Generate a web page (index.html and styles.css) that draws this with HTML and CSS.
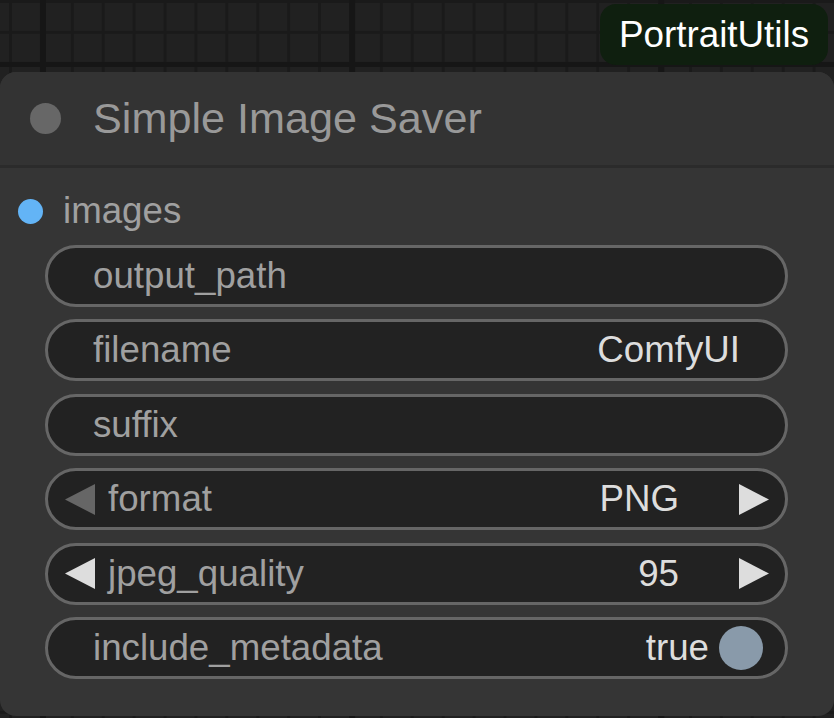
FILE: index.html
```html
<!DOCTYPE html>
<html>
<head>
<meta charset="utf-8">
<link rel="stylesheet" href="styles.css">
</head>
<body>
<div class="canvas">
  <div class="badge">PortraitUtils</div>
  <div class="node">
    <div class="node-title">
      <span class="title-dot"></span>
      <span class="title-text">Simple Image Saver</span>
    </div>
    <div class="node-body">
      <div class="input-row">
        <span class="slot-dot"></span>
        <span class="slot-label">images</span>
      </div>
      <div class="widgets">
        <div class="widget">
          <span class="w-label">output_path</span>
        </div>
        <div class="widget">
          <span class="w-label">filename</span>
          <span class="w-value">ComfyUI</span>
        </div>
        <div class="widget">
          <span class="w-label">suffix</span>
        </div>
        <div class="widget combo">
          <svg class="arrow dim" width="30" height="31" viewBox="0 0 30 31"><polygon points="30,0 30,31 0,15.5"/></svg>
          <span class="w-label">format</span>
          <span class="w-value">PNG</span>
          <svg class="arrow" width="30" height="31" viewBox="0 0 30 31"><polygon points="0,0 0,31 30,15.5"/></svg>
        </div>
        <div class="widget combo">
          <svg class="arrow" width="30" height="31" viewBox="0 0 30 31"><polygon points="30,0 30,31 0,15.5"/></svg>
          <span class="w-label">jpeg_quality</span>
          <span class="w-value">95</span>
          <svg class="arrow" width="30" height="31" viewBox="0 0 30 31"><polygon points="0,0 0,31 30,15.5"/></svg>
        </div>
        <div class="widget toggle">
          <span class="w-label">include_metadata</span>
          <span class="w-value">true</span>
          <span class="knob"></span>
        </div>
      </div>
    </div>
  </div>
</div>
</body>
</html>
```
FILE: styles.css
```css
* { box-sizing: border-box; }
html, body {
  margin: 0;
  padding: 0;
  width: 834px;
  height: 718px;
  overflow: hidden;
  font-family: "Liberation Sans", Arial, sans-serif;
}
.canvas {
  position: relative;
  width: 834px;
  height: 718px;
  background-color: #212121;
  background-image:
    linear-gradient(to right, #161616 6px, transparent 6px),
    linear-gradient(to bottom, #161616 5px, transparent 5px),
    linear-gradient(to right, #1a1a1a 3px, transparent 3px),
    linear-gradient(to bottom, #1a1a1a 3px, transparent 3px);
  background-size: 309.2px 100%, 100% 309.2px, 30.92px 100%, 100% 30.92px;
  background-position: 40px 0, 0 62px, 9px 0, 0 0;
}
.badge {
  position: absolute;
  left: 600px;
  top: 4px;
  width: 228px;
  height: 61px;
  border-radius: 16px;
  background: #0f1f0f;
  color: #ffffff;
  font-size: 36.8px;
  display: flex;
  align-items: center;
  justify-content: center;
}
.node {
  position: absolute;
  left: 0;
  top: 72px;
  width: 834px;
  height: 644px;
  border-radius: 16px;
  background: #353535;
  overflow: hidden;
}
.node-title {
  height: 96px;
  background: #333333;
  border-bottom: 3px solid #2b2b2b;
  display: flex;
  align-items: center;
  padding-left: 30px;
  gap: 32px;
}
.title-dot {
  width: 31px;
  height: 31px;
  border-radius: 50%;
  background: #676767;
  flex: none;
}
.title-text {
  font-size: 43.2px;
  color: #999999;
}
.node-body {
  padding-top: 23px;
}
.input-row {
  height: 40px;
  display: flex;
  align-items: center;
  padding-left: 18px;
  gap: 20px;
}
.slot-dot {
  width: 25px;
  height: 25px;
  border-radius: 50%;
  background: #63b4f6;
  flex: none;
}
.slot-label {
  font-size: 36.7px;
  color: #a0a0a0;
}
.widgets {
  margin-top: 14px;
  padding: 0 46px 0 45px;
  display: flex;
  flex-direction: column;
  gap: 12.4px;
}
.widget {
  height: 62px;
  border: 3px solid #666666;
  border-radius: 31px;
  background: #222222;
  display: flex;
  align-items: center;
  padding: 0 45px;
  font-size: 36.7px;
}
.w-label {
  flex: 1;
  color: #a0a0a0;
  white-space: nowrap;
}
.w-value {
  color: #dddddd;
  white-space: nowrap;
}
.combo {
  padding: 0 16px 0 17px;
}
.combo .w-label {
  margin-left: 13px;
}
.combo .w-value {
  margin-right: 60px;
}
.arrow {
  flex: none;
  fill: #dddddd;
}
.arrow.dim {
  fill: #666666;
}
.toggle {
  padding-right: 22px;
}
.toggle .w-value {
  margin-right: 10px;
}
.knob {
  width: 44px;
  height: 44px;
  border-radius: 50%;
  background: #899aaa;
  flex: none;
}
```
